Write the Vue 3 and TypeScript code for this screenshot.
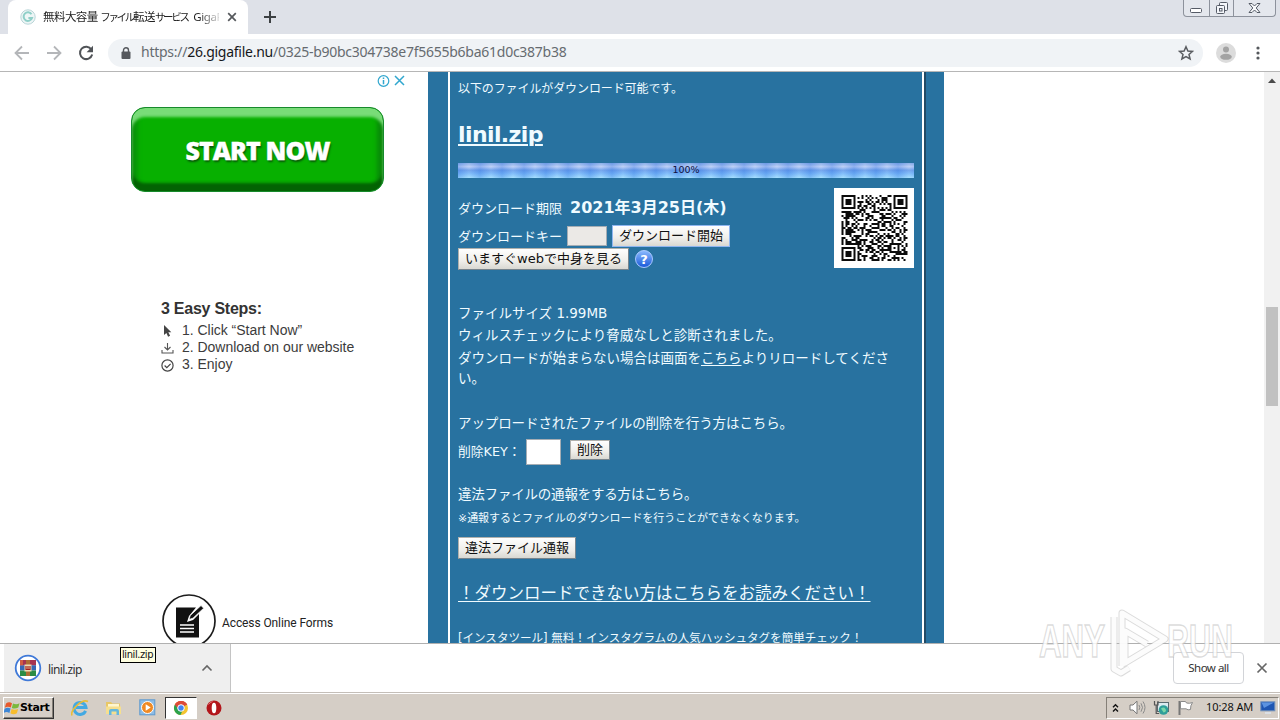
<script setup lang="ts">
const address = { scheme: 'https://', host: '26.gigafile.nu', path: '/0325-b90bc304738e7f5655b6ba61d0c387b38' }

// Version 4-L QR symbol, byte mode, single Reed-Solomon block.
function qrPath(text: string, mask: number): string {
  const size = 33
  const dataLen = 80
  const eccLen = 20
  const grid: boolean[][] = Array.from({ length: size }, () => Array(size).fill(false))
  const fixed: boolean[][] = Array.from({ length: size }, () => Array(size).fill(false))
  const set = (x: number, y: number, dark: boolean) => {
    if (x < 0 || y < 0 || x >= size || y >= size) return
    grid[y][x] = dark
    fixed[y][x] = true
  }
  for (let i = 0; i < size; i++) {
    set(6, i, i % 2 === 0)
    set(i, 6, i % 2 === 0)
  }
  for (const [cx, cy] of [[3, 3], [size - 4, 3], [3, size - 4]]) {
    for (let dy = -4; dy <= 4; dy++) {
      for (let dx = -4; dx <= 4; dx++) {
        const d = Math.max(Math.abs(dx), Math.abs(dy))
        set(cx + dx, cy + dy, d !== 2 && d !== 4)
      }
    }
  }
  for (let dy = -2; dy <= 2; dy++) {
    for (let dx = -2; dx <= 2; dx++) set(26 + dx, 26 + dy, Math.max(Math.abs(dx), Math.abs(dy)) !== 1)
  }
  const fmt = (1 << 3) | mask
  let rem = fmt
  for (let i = 0; i < 10; i++) rem = (rem << 1) ^ ((rem >>> 9) * 0x537)
  const bits = ((fmt << 10) | rem) ^ 0x5412
  const bit = (i: number) => ((bits >>> i) & 1) === 1
  for (let i = 0; i <= 5; i++) set(8, i, bit(i))
  set(8, 7, bit(6))
  set(8, 8, bit(7))
  set(7, 8, bit(8))
  for (let i = 9; i < 15; i++) set(14 - i, 8, bit(i))
  for (let i = 0; i < 8; i++) set(size - 1 - i, 8, bit(i))
  for (let i = 8; i < 15; i++) set(8, size - 15 + i, bit(i))
  set(8, size - 8, true)

  const stream: number[] = []
  const push = (v: number, n: number) => {
    for (let i = n - 1; i >= 0; i--) stream.push((v >>> i) & 1)
  }
  push(4, 4)
  push(text.length, 8)
  for (const ch of text) push(ch.charCodeAt(0), 8)
  push(0, 4)
  const words: number[] = []
  for (let i = 0; i < stream.length; i += 8) words.push(parseInt(stream.slice(i, i + 8).join(''), 2))
  for (let p = 0xec; words.length < dataLen; p ^= 0xec ^ 0x11) words.push(p)

  const mul = (a: number, b: number) => {
    let z = 0
    for (let i = 7; i >= 0; i--) {
      z = (z << 1) ^ ((z >>> 7) * 0x11d)
      z ^= ((b >>> i) & 1) * a
    }
    return z
  }
  const gen: number[] = Array(eccLen).fill(0)
  gen[eccLen - 1] = 1
  let root = 1
  for (let i = 0; i < eccLen; i++) {
    for (let j = 0; j < eccLen; j++) {
      gen[j] = mul(gen[j], root)
      if (j + 1 < eccLen) gen[j] ^= gen[j + 1]
    }
    root = mul(root, 2)
  }
  const ecc: number[] = Array(eccLen).fill(0)
  for (const w of words) {
    const f = w ^ (ecc.shift() as number)
    ecc.push(0)
    gen.forEach((g, i) => { ecc[i] ^= mul(g, f) })
  }
  const all = words.concat(ecc)

  const flip = (x: number, y: number) => {
    switch (mask) {
      case 0: return (x + y) % 2 === 0
      case 1: return y % 2 === 0
      case 2: return x % 3 === 0
      case 3: return (x + y) % 3 === 0
      case 4: return (Math.floor(x / 3) + Math.floor(y / 2)) % 2 === 0
      case 5: return ((x * y) % 2) + ((x * y) % 3) === 0
      case 6: return (((x * y) % 2) + ((x * y) % 3)) % 2 === 0
      default: return (((x + y) % 2) + ((x * y) % 3)) % 2 === 0
    }
  }
  let n = 0
  for (let right = size - 1; right >= 1; right -= 2) {
    if (right === 6) right = 5
    for (let v = 0; v < size; v++) {
      for (let j = 0; j < 2; j++) {
        const x = right - j
        const y = ((right + 1) & 2) === 0 ? size - 1 - v : v
        if (fixed[y][x]) continue
        const dark = n < all.length * 8 && ((all[n >>> 3] >>> (7 - (n & 7))) & 1) === 1
        grid[y][x] = dark !== flip(x, y)
        n++
      }
    }
  }
  let d = ''
  grid.forEach((row, y) => row.forEach((dark, x) => { if (dark) d += `M${x} ${y}h1v1h-1z` }))
  return d
}

const qr = qrPath(address.scheme + address.host + address.path, 2)
</script>

<template>
  <div class="screen">
    <header class="tabs">
      <div class="tab">
        <svg class="fav" width="16" height="16" viewBox="0 0 16 16"><circle cx="8" cy="8" r="7.2" fill="#eef6f6" stroke="#b9d5d8" /><path d="M11.5 5.2A4.3 4.3 0 1 0 12 9H8.4" fill="none" stroke="#8fcfc8" stroke-width="2" /></svg>
        <span class="tab-title">無料大容量 <span class="kana">ファイル</span>転送<span class="kana">サービス</span> <span class="lat">GigaF</span></span>
        <svg class="tab-x" width="10" height="10" viewBox="0 0 10 10"><path d="M1.2 1.2l7.6 7.6M8.8 1.2L1.2 8.8" stroke="#55585c" stroke-width="1.7" /></svg>
      </div>
      <svg class="plus" width="12" height="12" viewBox="0 0 12 12"><path d="M6 0v12M0 6h12" stroke="#3c4043" stroke-width="2" /></svg>
      <div class="winctl">
        <span class="w1"><svg width="13" height="6"><rect x=".5" y=".5" width="11" height="4" rx="1" fill="#fff" stroke="#555b66" /></svg></span>
        <span class="w2"><svg width="14" height="14" viewBox="0 0 14 14" fill="#f4f6fa" stroke="#555b66"><rect x="4.500" y="1.500" width="8" height="8" rx="1" /><rect x="1.500" y="4.500" width="8" height="8" rx="1" /><rect x="4.500" y="7.500" width="2.500" height="2.500" /></svg></span>
        <span class="w3"><svg width="13" height="12" viewBox="0 0 13 12"><path d="M1 1.500h3l2.500 2.500 2.500-2.500h3l-3.800 4.500 3.800 4.500h-3l-2.500-2.500-2.500 2.500h-3l3.800-4.500z" fill="#f8f9fb" stroke="#555b66" /></svg></span>
      </div>
    </header>

    <nav class="toolbar">
      <svg class="back" width="16" height="16" viewBox="0 0 16 16"><path d="M15 8H2M8 1.500L1.500 8 8 14.500" fill="none" stroke="#b4b6b9" stroke-width="1.800" /></svg>
      <svg class="fwd" width="16" height="16" viewBox="0 0 16 16"><path d="M1 8h13M8 1.500L14.500 8 8 14.500" fill="none" stroke="#b4b6b9" stroke-width="1.800" /></svg>
      <svg class="reload" width="16" height="16" viewBox="0 0 16 16"><path d="M13.400 4.500A6.200 6.200 0 1 0 14.200 9.500" fill="none" stroke="#505357" stroke-width="2" /><path d="M15 .8v6.400H8.600z" fill="#505357" /></svg>
      <div class="omni">
        <svg class="lock" width="10" height="13" viewBox="0 0 10 13"><rect x=".5" y="4.500" width="9" height="7.500" rx="1" fill="#55585d" /><path d="M2.500 5V3.300a2.500 2.500 0 0 1 5 0V5" fill="none" stroke="#55585d" stroke-width="1.400" /></svg>
        <span class="url">{{ address.scheme }}<b>{{ address.host }}</b>{{ address.path }}</span>
        <svg class="star" width="16" height="16" viewBox="0 0 16 16"><path d="M8 1.700l1.900 4.300 4.600.4-3.500 3 1.100 4.600L8 11.600 3.900 14 5 9.400l-3.500-3 4.600-.4z" fill="none" stroke="#5a5d61" stroke-width="1.500" /></svg>
      </div>
      <svg class="person" width="20" height="20" viewBox="0 0 20 20"><circle cx="10" cy="10" r="10" fill="#dcdcdc" /><circle cx="10" cy="6.600" r="3" fill="#a3a3a3" /><ellipse cx="10" cy="13.800" rx="5.800" ry="3" fill="#a3a3a3" /></svg>
      <svg class="dots" width="4" height="14" viewBox="0 0 4 14" fill="#55585c"><circle cx="2" cy="2" r="1.600" /><circle cx="2" cy="7" r="1.600" /><circle cx="2" cy="12" r="1.600" /></svg>
    </nav>

    <main class="page">
      <aside class="ad">
        <div class="adchoices">
          <svg width="13" height="13" viewBox="0 0 13 13"><circle cx="6.500" cy="6" r="5.300" fill="none" stroke="#31a7cf" stroke-width="1.200" /><path d="M6.500 5v4.200M6.500 2.600V4" stroke="#31a7cf" stroke-width="1.500" /></svg>
          <svg width="11" height="11" viewBox="0 0 11 11"><path d="M1 1l9 9M10 1L1 10" stroke="#31a7cf" stroke-width="1.500" /></svg>
        </div>
        <div class="cta"><span>START NOW</span></div>
        <div class="steps">
          <h3>3 Easy Steps:</h3>
          <p><svg width="13" height="14" viewBox="0 0 13 14"><path d="M3 1v10l2.400-2 1.700 3.700 2-1-1.800-3.500h3z" fill="#444" /></svg><span>1. Click “Start Now”</span></p>
          <p><svg width="13" height="14" viewBox="0 0 13 14"><path d="M6.500 2v6.500M3.500 6l3 3 3-3M1 9v3h11V9" fill="none" stroke="#555" stroke-width="1.100" /></svg><span>2. Download on our website</span></p>
          <p><svg width="13" height="14" viewBox="0 0 13 14"><circle cx="6.500" cy="7.500" r="5.600" fill="none" stroke="#444" stroke-width="1.200" /><path d="M3.600 7.500l2.200 2.200L9.600 5.800" fill="none" stroke="#444" stroke-width="1.200" /></svg><span>3. Enjoy</span></p>
        </div>
        <div class="forms">
          <svg width="54" height="54" viewBox="0 0 54 54"><circle cx="27" cy="27" r="26" fill="#fff" stroke="#1c1c1c" stroke-width="1.700" /><path d="M14 13.500h20L27 22l-2 6 6-2 6-6v23.500H14z" fill="#111" /><path d="M18 31h14M18 34.500h14M18 38h14" stroke="#fff" stroke-width="1.500" /><path d="M27 25.500l1.200-4L39 11.500l2.700 2.700-10.700 10z" fill="#111" stroke="#fff" stroke-width=".8" /></svg>
          <span>Access Online Forms</span>
        </div>
      </aside>

      <section class="blue">
        <div class="panel">
          <p class="line l1">以下のファイルがダウンロード可能です。</p>
          <h1><a>linil.zip</a></h1>
          <div class="bar">100%</div>
          <div class="info">
            <div class="fields">
              <div class="row r1"><span class="lab">ダウンロード期限</span><strong>2021年3月25日(木)</strong></div>
              <div class="row r2"><span class="lab up1">ダウンロードキー</span><i class="box key"></i><span class="btn b1">ダウンロード開始</span></div>
              <div class="row r3"><span class="btn b2">いますぐwebで中身を見る</span>
                <svg width="20" height="20" viewBox="0 0 20 20"><defs><linearGradient id="hg" x1="0" y1="0" x2="0" y2="1"><stop offset="0" stop-color="#8dbcff" /><stop offset="1" stop-color="#1757d8" /></linearGradient></defs><circle cx="10" cy="10" r="8.500" fill="url(#hg)" stroke="#a9c8ff" /><text x="10" y="14.800" text-anchor="middle" class="q">?</text></svg>
              </div>
            </div>
            <svg class="qr" width="80" height="80" viewBox="-3.750 -3.500 40 40"><rect x="-4" y="-4" width="41" height="41" fill="#fff" /><path :d="qr" fill="#0c0c0c" /></svg>
          </div>
          <p class="line m1">ファイルサイズ 1.99MB</p>
          <p class="line m2">ウィルスチェックにより脅威なしと診断されました。</p>
          <p class="line m3">ダウンロードが始まらない場合は画面を<a>こちら</a>よりリロードしてくださ<br>い。</p>
          <p class="line m4">アップロードされたファイルの削除を行う方はこちら。</p>
          <div class="row r4"><span class="dk">削除KEY：</span><i class="box del"></i><span class="btn b3">削除</span></div>
          <p class="line m5">違法ファイルの通報をする方はこちら。</p>
          <p class="line m6">※通報するとファイルのダウンロードを行うことができなくなります。</p>
          <span class="btn b4">違法ファイル通報</span>
          <p class="line m7"><a>！ダウンロードできない方はこちらをお読みください！</a></p>
          <p class="line m8">[インスタツール] 無料！インスタグラムの人気ハッシュタグを簡単チェック！</p>
        </div>
      </section>

      <div class="scroll">
        <svg width="16" height="16" viewBox="0 0 16 16"><path d="M4 11l4-4.500 4 4.500z" fill="#4a4a4a" /></svg>
        <div class="thumb"></div>
      </div>
    </main>

    <footer class="shelf">
      <div class="item">
        <svg width="28" height="28" viewBox="0 0 28 28"><circle cx="14" cy="14" r="12.300" fill="#fff" stroke="#3f79d8" stroke-width="1.800" /><rect x="6" y="6" width="16" height="5.500" fill="#a63450" /><rect x="6" y="11.300" width="16" height="5.200" fill="#3766b4" /><rect x="6" y="16.500" width="16" height="5.500" fill="#2b8b45" /><rect x="6" y="6" width="3" height="5.300" fill="#d15b42" /><rect x="12" y="6" width="4" height="16" fill="#ad6c33" /><rect x="10.500" y="10.500" width="7" height="7" fill="#eed9b2" /><path d="M12 12v3.500h4V12M14 12v3" fill="none" stroke="#a5201d" stroke-width="1.200" /></svg>
        <span>linil.zip</span>
        <svg class="chev" width="12" height="8" viewBox="0 0 12 8"><path d="M1.500 6.500L6 2l4.500 4.500" fill="none" stroke="#666" stroke-width="1.600" /></svg>
      </div>
      <div class="showall">Show all</div>
      <svg class="sx" width="12" height="12" viewBox="0 0 12 12"><path d="M1.500 1.500l9 9M10.500 1.500l-9 9" stroke="#666" stroke-width="1.700" /></svg>
    </footer>

    <div class="taskbar">
      <div class="start">
        <svg width="17" height="16" viewBox="0 0 17 16"><path d="M2 3.500Q5 1 8 3.200L6.800 7.600Q3.800 5.800.8 7.800z" fill="#e8592b" /><path d="M9 3.500q3.500 1.500 6.500-.3L14.300 7.600q-3.500 1.700-6.500.3z" fill="#7bb93c" /><path d="M.6 8.800q3-2 6-.2L5.400 13q-3-2-6 0z" fill="#3c86d6" /><path d="M7.600 8.900q3 1.600 6.500 0L12.900 13.300q-3.500 1.700-6.500 0z" fill="#f7bd2d" /></svg>
        <b>Start</b>
      </div>
      <svg class="ie" width="18" height="18" viewBox="0 0 18 18"><path d="M14.600 11.800A6 6 0 1 1 15 8.500H5" fill="none" stroke="#43a9e2" stroke-width="3" /><path d="M1 16.500C-1 11 11-.5 17 2.500" fill="none" stroke="#e9bd37" stroke-width="1.600" /></svg>
      <svg class="fold" width="18" height="18" viewBox="0 0 18 18"><path d="M1 3h5l1.500 1.500H15V14H1z" fill="#e8c766" /><path d="M3 5h11v5H3z" fill="#fff6cf" /><path d="M1 7.500h15V15H1z" fill="#f6df8e" /><path d="M4 16v-4q0-2 2-2h6q2 0 2 2v4h-2.500v-3.500h-5V16z" fill="#65b7dd" /></svg>
      <svg class="wmp" width="17" height="17" viewBox="0 0 17 17"><rect x=".8" y=".8" width="15" height="15" fill="#8dbce5" stroke="#5f9bcf" /><circle cx="8.500" cy="8.500" r="6" fill="#f08a24" stroke="#fff" /><path d="M6.700 5.200l5 3.300-5 3.300z" fill="#fff" /></svg>
      <div class="active"><svg width="16" height="16" viewBox="0 0 16 16"><circle cx="8" cy="8" r="7" fill="#f4c430" /><path d="M8 8L1.900 4.500A7 7 0 0 1 14.100 4.500z" fill="#dd4b39" /><path d="M1.900 4.500A7 7 0 0 0 7.500 15L10 9.500 8 8z" fill="#2ba24c" /><path d="M8 5h6.300a7 7 0 0 0-12.400-.5L5 9z" fill="#dd4b39" /><circle cx="8" cy="8" r="3.300" fill="#4285f4" stroke="#fff" stroke-width="1" /></svg></div>
      <svg class="opera" width="16" height="16" viewBox="0 0 16 16"><circle cx="8" cy="8" r="7.500" fill="#b3161b" /><ellipse cx="8" cy="8" rx="2.300" ry="5.300" fill="#fff" /><path d="M2.500 4.500a7 7 0 0 1 4-3" stroke="#e8777a" fill="none" /></svg>
      <div class="tray">
        <svg class="up" width="7" height="10" viewBox="0 0 7 10"><path d="M1 4.300L3.500 1.800 6 4.300M1 8.600l2.500-2.500L6 8.600" fill="none" stroke="#111" stroke-width="1.400" /></svg>
        <svg class="vol" width="17" height="15" viewBox="0 0 17 15"><path d="M1 5h3l4-3.800v12.600L4 10H1z" fill="#fdfdfd" stroke="#777" /><path d="M10 5q1.500 2.500 0 5M12 3.300q3 4.200 0 8.400M14 1.500q4 6 0 12" fill="none" stroke="#8a8a8a" /></svg>
        <svg class="net" width="17" height="16" viewBox="0 0 17 16"><rect x="4.500" y="2.500" width="11" height="9" fill="#dcebf0" stroke="#5b6a70" /><circle cx="10.500" cy="10" r="4.800" fill="#2f9f9a" /><path d="M8 8.500q3-2 4.500.5t-2 3.500z" fill="#7bd6a8" /><path d="M1.500 1v4h3.500V1M3.200 5v8.500h3" fill="none" stroke="#555" stroke-width="1.200" /></svg>
        <svg class="flag" width="17" height="16" viewBox="0 0 17 16"><path d="M2.500 1v14" stroke="#777" stroke-width="2" /><path d="M3.500 1.500h5l1 1.500q3 .8 6-.5-2.200 3-2 7-2.500 1-4.500-.7H3.500z" fill="#fff" stroke="#8a8a8a" /></svg>
        <span class="clock">10:28 AM</span>
        <svg class="desk" width="16" height="13" viewBox="0 0 16 13"><rect x=".8" y=".8" width="14" height="9" fill="#1f56b2" stroke="#7391b9" /><path d="M1.500 1.500h12.500L4 7z" fill="#5c93e0" /><path d="M5 12h6" stroke="#dce4ee" stroke-width="1.500" /></svg>
      </div>
    </div>

    <div class="tip">linil.zip</div>
    <svg class="mark" width="204" height="72" viewBox="0 0 204 72">
      <g class="mtext"><text x="5" y="51" textLength="66" lengthAdjust="spacingAndGlyphs">ANY</text><text x="133" y="51" textLength="66" lengthAdjust="spacingAndGlyphs">RUN</text></g>
      <g fill="none" stroke-linejoin="round">
        <path d="M80 11v52l7 4 8-5M88 60V7l43 26-40 24V25l22 13" stroke="#b8b8b8" stroke-opacity=".5" stroke-width="7" />
        <path d="M80 11v52l7 4 8-5M88 60V7l43 26-40 24V25l22 13" stroke="#fff" stroke-opacity=".92" stroke-width="5" />
      </g>
    </svg>
  </div>
</template>

<style>
html, body { margin: 0; overflow: hidden; }
</style>

<style scoped>
.screen { position: relative; width: 1280px; height: 720px; overflow: hidden; display: flex; flex-direction: column; background: #fff; font-family: "DejaVu Sans", "Noto Sans CJK JP", sans-serif; white-space: nowrap; }
.screen * { box-sizing: border-box; }
svg { display: block; flex: none; }
p, h1, h3 { margin: 0; font-weight: 400; }

.tabs { height: 34px; flex: none; display: flex; background: #dee1e8; padding-left: 8px; }
.tab { width: 240px; height: 34px; background: #fff; border-radius: 8px 8px 0 0; display: flex; align-items: center; padding-left: 12px; }
.tab-title { width: 176px; margin-left: 7px; overflow: hidden; font: 11.5px/20px "Noto Sans", "Noto Sans CJK JP", sans-serif; letter-spacing: -0.55px; color: #222; mask-image: linear-gradient(90deg, #000 155px, transparent 180px); }
.kana { font-size: 10.5px; letter-spacing: -2.3px; }
.lat { margin-left: 3px; letter-spacing: -0.4px; }
.tab-x { margin-left: 8px; }
.plus { margin: 11px 0 0 16px; }
.winctl { margin-left: auto; margin-right: 4px; width: 93px; height: 17px; display: flex; border: 1px solid #8d929c; border-top: 0; border-radius: 0 0 4px 4px; background: #e4e7ed; }
.winctl span { display: flex; align-items: center; justify-content: center; }
.w1 { width: 25px; align-items: flex-end !important; padding-bottom: 2px; }
.w2 { width: 25px; border-left: 1px solid #8d929c; border-right: 1px solid #8d929c; }
.w3 { flex: 1; }

.toolbar { height: 38px; flex: none; display: flex; align-items: center; padding-left: 14px; padding-top: 1px; border-bottom: 1px solid #b6b6b6; background: #fff; }
.fwd { margin-left: 16px; }
.reload { margin-left: 16px; }
.omni { margin-left: 14px; width: 1095px; height: 28px; border-radius: 14px; background: #f0f3f6; display: flex; align-items: center; padding-left: 13px; }
.url { margin-left: 10px; margin-top: -2px; font: 14px/20px "Noto Sans", sans-serif; letter-spacing: -0.26px; color: #666b70; }
.url b { font-weight: 400; color: #15171a; }
.star { margin-left: auto; margin-right: 9px; }
.person { margin-left: 13px; }
.dots { margin-left: 20px; }

.page { height: 571px; flex: none; display: flex; overflow: hidden; }
.ad { width: 428px; font-family: "Liberation Sans", Arial, sans-serif; }
.adchoices { height: 35px; padding: 3px 0 0 377px; display: flex; gap: 4px; align-items: flex-start; }
.cta { margin-left: 131px; width: 253px; height: 85px; border-radius: 14px; border: 1px solid #178a2c; background: #07b000; box-shadow: inset 0 9px 3px #79dc78, inset 0 -8px 3px #036303, inset 6px 0 4px #099409, inset -6px 0 4px #098b09; display: flex; align-items: center; justify-content: center; }
.cta span { font: 800 25px/30px "Open Sans", sans-serif; letter-spacing: -0.9px; color: #fff; text-shadow: 1px 2px 2px #075907; -webkit-text-stroke: 0.4px #fff; }
.steps { margin: 107px 0 0 161px; color: #3c3c3c; }
.steps h3 { font: 700 16px/20px "Liberation Sans", sans-serif; color: #333; letter-spacing: -0.25px; margin-bottom: 3px; }
.steps p { height: 17px; display: flex; align-items: center; font-size: 14px; line-height: 17px; letter-spacing: -0.02px; }
.steps p span { margin-left: 8px; }
.forms { margin: 221px 0 0 162px; display: flex; align-items: center; }
.forms span { margin-left: 6px; margin-top: 3px; font: 12px/18px Roboto, sans-serif; color: #222; letter-spacing: -0.1px; }

.blue { width: 516px; padding: 0 18px 0 20px; background: #2872a0; }
.panel { height: 571px; overflow: hidden; border-left: 2px solid #fff; border-right: 2px solid #214a66; padding: 0 10px 0 8px; color: #f0fbff; font-size: 13.5px; box-shadow: inset -2px 0 #fff; }
.panel a { text-decoration: underline; text-underline-offset: 2px; text-decoration-thickness: 1px; }
.l1 { font-size: 12px; line-height: 20px; margin-top: 7px; letter-spacing: -0.1px; }
h1 { margin-top: 21px; height: 32px; font-size: 22px; line-height: 30px; font-weight: 700; letter-spacing: -0.6px; }
h1 a { text-decoration-thickness: 2px !important; }
.bar { margin-top: 11px; height: 15px; font-size: 9.5px; line-height: 14px; text-align: center; color: #101040; background: repeating-linear-gradient(90deg, rgba(60,120,225,0.3) 0, rgba(255,255,255,0.12) 11px, rgba(60,120,225,0.3) 22px), linear-gradient(#7da6e6 0, #b6cbf5 25%, #659bea 48%, #72b3f8 68%, #9cddff 100%); }
.info { display: flex; justify-content: space-between; height: 125px; padding-top: 10px; }
.fields { width: 330px; }
.row { display: flex; align-items: center; }
.r1 { height: 38px; }
.lab { width: 104px; font-size: 13px; }
.up1 { margin-top: -2px; }
.r1 strong { margin: -2px 0 0 8px; font-size: 16px; font-weight: 700; }
.r2 { height: 22px; margin-top: -1px; }
.r3 { height: 22px; margin-top: 1px; }
.r3 svg { margin-left: 5px; }
.q { font: 700 13px "DejaVu Sans", sans-serif; fill: #fff; }
.box { display: block; background: #fff; border: 1px solid #a5adb4; }
.key { width: 40px; height: 20px; margin-left: 5px; background: #ebe9e6; }
.btn { height: 22px; display: flex; align-items: center; justify-content: center; background: linear-gradient(#fefefe, #efeeea 60%, #d9d8d2); border: 1px solid #b0b0ac; border-right-color: #77848d; border-bottom-color: #77848d; color: #111; font-size: 13px; line-height: 18px; }
.b1 { width: 118px; margin-left: 5px; border-color: #8fb6f0; }
.b2 { width: 171px; }
.line { line-height: 20px; }
.m2 { margin-top: 2px; }
.m3 { margin-top: 3px; }
.m4 { margin-top: 25px; letter-spacing: -0.1px; }
.r4 { height: 26px; margin-top: 6px; }
.dk { width: 68px; font-size: 12.8px; margin-top: -3px; }
.del { width: 35px; height: 26px; }
.b3 { width: 40px; height: 20px; margin: -4px 0 0 9px; }
.m5 { margin-top: 19px; letter-spacing: -0.2px; }
.m6 { font-size: 11px; margin-top: 5px; letter-spacing: -0.05px; }
.b4 { width: 118px; margin-top: 8px; }
.m7 { font-size: 16.5px; line-height: 24px; margin-top: 23px; }
.m8 { font-size: 11.55px; margin-top: 22px; }
.scroll { width: 16px; margin-left: auto; background: #f1f1f1; }
.thumb { width: 12px; height: 99px; margin: 219px 0 0 2px; background: #c1c1c1; }

.shelf { height: 49px; flex: none; display: flex; align-items: center; border-top: 1px solid #b0b0b0; background: #fff; padding-left: 4px; }
.item { width: 227px; height: 48px; background: #efefef; border-right: 1px solid #c4c4c4; display: flex; align-items: center; padding-left: 10px; }
.item span { margin-left: 6px; margin-top: 4px; font: 12px/18px "Noto Sans", sans-serif; color: #333; letter-spacing: -0.6px; }
.chev { margin-left: auto; margin-right: 17px; }
.showall { margin-left: auto; width: 71px; height: 32px; border: 1px solid #d2d4d8; border-radius: 4px; font: 11.5px/29px "Noto Sans", sans-serif; text-align: center; color: #333; letter-spacing: -0.5px; }
.sx { margin: 0 12px 0 12px; }

.taskbar { height: 28px; flex: none; display: flex; align-items: center; background: #d5cec6; border-top: 1px solid #c4beb8; box-shadow: inset 0 1px #fff; padding: 2px 1px 0 3px; }
.start { width: 51px; height: 22px; display: flex; align-items: center; border: 1px solid; border-color: #fff #333 #333 #fff; box-shadow: inset -1px -1px #858078; }
.start b { font: 700 11px/14px "DejaVu Sans", sans-serif; letter-spacing: -0.4px; margin-left: -1px; color: #000; }
.ie { margin-left: 17px; }
.fold { margin-left: 16px; }
.wmp { margin-left: 16px; }
.active { width: 32px; height: 22px; margin-left: 9px; background: #fff; border: 1px solid; border-color: #333 #fff #fff #333; display: flex; align-items: center; justify-content: center; }
.opera { margin-left: 9px; }
.tray { margin-left: auto; width: 173px; height: 22px; border: 1px solid; border-color: #858078 #fff #fff #858078; display: flex; align-items: center; padding-left: 5px; }
.vol { margin-left: 10px; }
.net { margin-left: 7px; }
.flag { margin-left: 7px; }
.clock { margin-left: 12px; margin-top: -1px; font: 11px/16px "Noto Sans", sans-serif; width: 48px; letter-spacing: -0.1px; color: #111; }
.desk { margin-left: 6px; }

.tip { position: absolute; left: 120px; top: 647px; width: 36px; height: 16px; border: 1px solid #000; background: #ffffe1; font: 11px/13px "DejaVu Sans Condensed", "DejaVu Sans", sans-serif; letter-spacing: -0.4px; padding-left: 1px; color: #111; }
.mark { position: absolute; left: 1034px; top: 606px; }
.mtext text { font: 700 47px "Liberation Sans", sans-serif; fill: #fff; fill-opacity: 0.85; stroke: #b8b8b8; stroke-opacity: 0.5; stroke-width: 1.5px; }
</style>
